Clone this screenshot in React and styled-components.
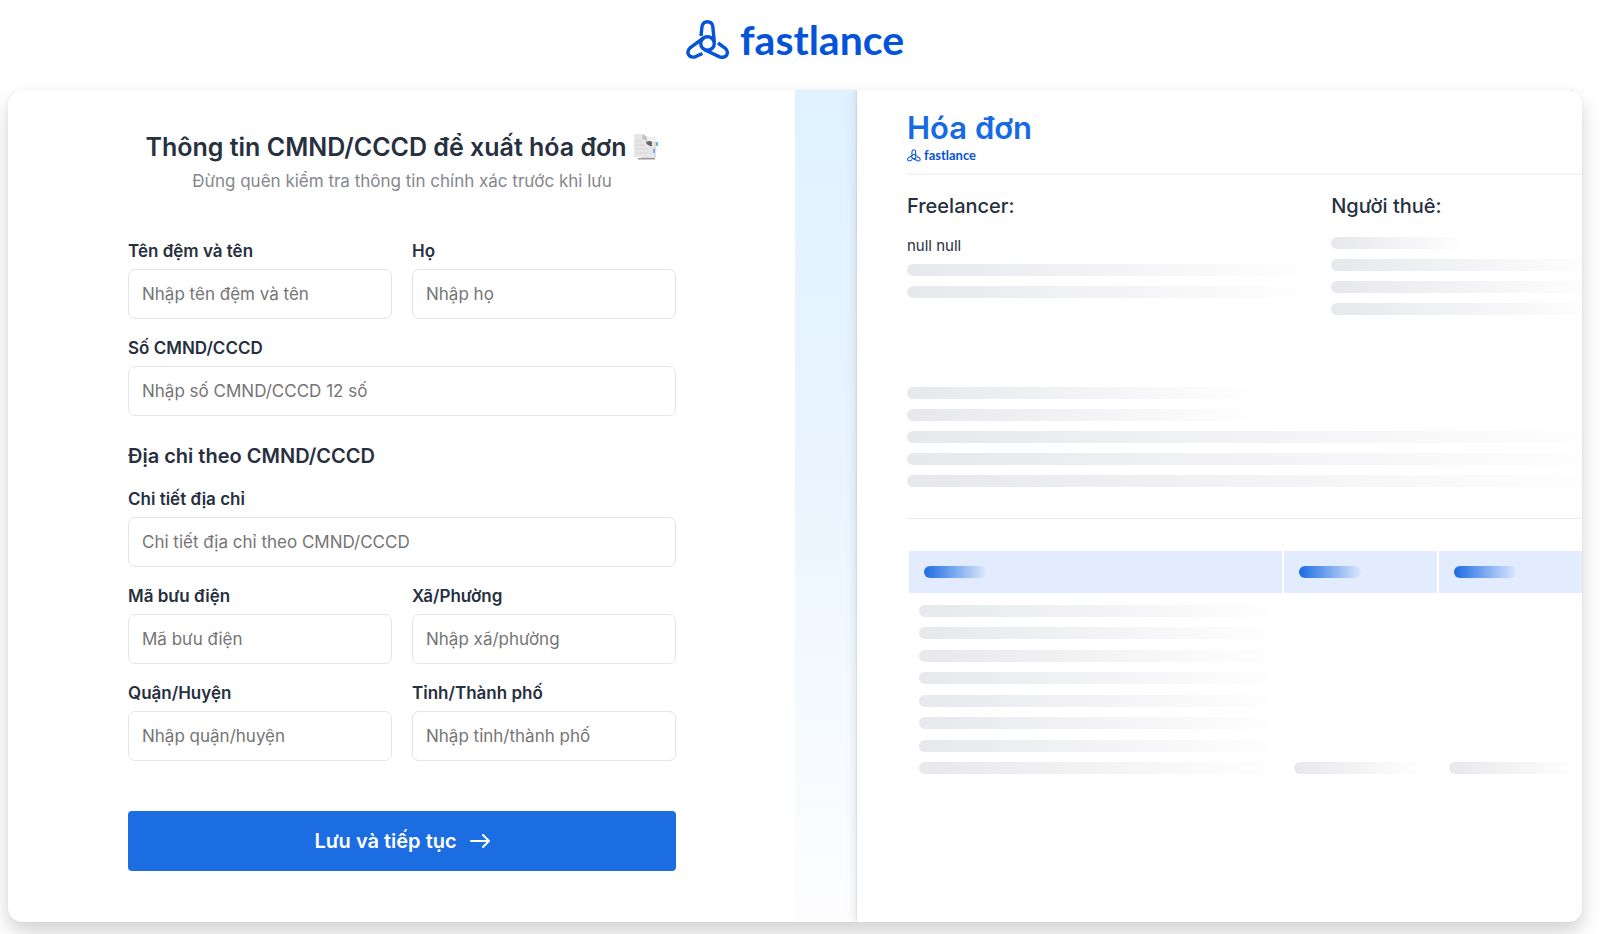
import { useState } from "react";
import styled, { createGlobalStyle } from "styled-components";

const FIELD_ROWS = [
  [
    { id: "firstName", label: "Tên đệm và tên", placeholder: "Nhập tên đệm và tên" },
    { id: "lastName", label: "Họ", placeholder: "Nhập họ" },
  ],
  [{ id: "idNumber", label: "Số CMND/CCCD", placeholder: "Nhập số CMND/CCCD 12 số" }],
];

const ADDRESS_ROWS = [
  [{ id: "street", label: "Chi tiết địa chỉ", placeholder: "Chi tiết địa chỉ theo CMND/CCCD" }],
  [
    { id: "postcode", label: "Mã bưu điện", placeholder: "Mã bưu điện" },
    { id: "ward", label: "Xã/Phường", placeholder: "Nhập xã/phường" },
  ],
  [
    { id: "district", label: "Quận/Huyện", placeholder: "Nhập quận/huyện" },
    { id: "province", label: "Tỉnh/Thành phố", placeholder: "Nhập tỉnh/thành phố" },
  ],
];

const Logo = ({ small }) => (
  <Brand href="#" $small={small}>
    <BrandMark viewBox="0 0 44 40" $small={small} aria-hidden="true">
      <circle cx="21.500" cy="23.500" r="6.800" />
      <path d="M15 16 L16 6.500 Q17 1.800 21.500 1.800 Q26 1.800 26.800 6.500 L28.300 22" />
      <path d="M17.500 18 L4.400 27.500 Q0.800 30.800 2.400 34.400 Q4.400 38 9 36.800 L16.500 33.500" />
      <path d="M18 29.500 L33.600 36.800 Q38.600 38.400 40.800 34.800 Q42.600 31 39 28 L32 23" />
    </BrandMark>
    fastlance
  </Brand>
);

const Documents = () => (
  <DocIcon viewBox="0 0 26 28" aria-hidden="true">
    <path d="M8 8h15v17H8z" fill="#dcdcdc" />
    <path d="M5 25h17v1.500H5z" fill="#9a9a9a" />
    <path d="M1 1h9l4 3v4h7v16H1z" fill="#e6e6e6" />
    <path d="M14 4h8v5h-8z" fill="#efefef" />
    <path d="M10 1l4 3v4l-5-2z" fill="#c2c2c2" />
    <path d="M13 9q4-2 6 0v4q-3 1-6-3z" fill="#666" />
    <path d="M3 8h6M3 12h9M3 16h12M3 20h12" stroke="#d6d6d6" />
    <path d="M23 9h2v4h-2zM20 16h2v4h-2z" fill="#6aaef2" />
  </DocIcon>
);

const Fields = ({ rows, values, onChange }) =>
  rows.map((row) => (
    <Row key={row[0].id}>
      {row.map(({ id, label, placeholder }) => (
        <Field key={id}>
          <Label htmlFor={id}>{label}</Label>
          <Input
            id={id}
            placeholder={placeholder}
            value={values[id] || ""}
            onChange={(e) => onChange(id, e.target.value)}
          />
        </Field>
      ))}
    </Row>
  ));

const Bars = ({ widths }) => (
  <BarList>
    {widths.map((width, i) => (
      <Bar key={i} $width={width} />
    ))}
  </BarList>
);

const App = () => {
  const [values, setValues] = useState({});
  const setField = (id, value) => setValues({ ...values, [id]: value });

  return (
    <>
      <GlobalStyle />
      <Header>
        <Logo />
      </Header>
      <Card>
        <FormPanel onSubmit={(e) => e.preventDefault()}>
          <Title>
            Thông tin CMND/CCCD để xuất hóa đơn
            <Documents />
          </Title>
          <Subtitle>Đừng quên kiểm tra thông tin chính xác trước khi lưu</Subtitle>
          <Fields rows={FIELD_ROWS} values={values} onChange={setField} />
          <SectionTitle>Địa chỉ theo CMND/CCCD</SectionTitle>
          <Fields rows={ADDRESS_ROWS} values={values} onChange={setField} />
          <SaveButton type="submit">
            Lưu và tiếp tục
            <Arrow viewBox="0 0 20 14" aria-hidden="true">
              <path d="M1 7h18M13 1l6 6-6 6" />
            </Arrow>
          </SaveButton>
        </FormPanel>
        <PreviewPanel>
          <Sheet>
            <SheetHeader>
              <InvoiceTitle>Hóa đơn</InvoiceTitle>
              <Logo small />
            </SheetHeader>
            <Parties>
              <div>
                <PartyTitle>Freelancer:</PartyTitle>
                <PartyName>null null</PartyName>
                <Bars widths={["100%", "100%"]} />
              </div>
              <div>
                <PartyTitle>Người thuê:</PartyTitle>
                <Bars widths={["50%", "100%", "100%", "100%"]} />
              </div>
            </Parties>
            <Details>
              <Bars widths={["50%", "50%", "100%", "100%", "100%"]} />
            </Details>
            <Table>
              <thead>
                <tr>
                  <HeadCell $wide><Pill /></HeadCell>
                  <HeadCell><Pill /></HeadCell>
                  <HeadCell><Pill /></HeadCell>
                </tr>
              </thead>
              <tbody>
                <tr>
                  <Cell>
                    <ItemLines>
                      {Array.from({ length: 8 }, (_, i) => (
                        <Bar key={i} $width="100%" />
                      ))}
                    </ItemLines>
                  </Cell>
                  <Cell><Bar $width="94%" /></Cell>
                  <Cell><Bar $width="94%" /></Cell>
                </tr>
              </tbody>
            </Table>
          </Sheet>
        </PreviewPanel>
      </Card>
    </>
  );
};

export default App;

const GlobalStyle = createGlobalStyle`
  * {
    box-sizing: border-box;
  }
  body {
    margin: 0;
    background: #fff;
    color: #27303f;
    font-family: Inter, "Liberation Sans", sans-serif;
    overflow: hidden;
  }
  h1, h2, h3, p {
    margin: 0;
  }
`;
const Header = styled.header`
  display: flex;
  justify-content: center;
  align-items: center;
  height: 90px;
  padding: 0 18px 10px 8px;
`;
const Brand = styled.a`
  display: flex;
  align-items: center;
  gap: ${({ $small }) => ($small ? "3px" : "10px")};
  color: #0553d8;
  font-family: Lato, sans-serif;
  font-size: ${({ $small }) => ($small ? "13px" : "41px")};
  font-weight: 700;
  line-height: ${({ $small }) => ($small ? "14px" : "36px")};
  text-decoration: none;
`;
const BrandMark = styled.svg`
  width: ${({ $small }) => ($small ? "14px" : "44px")};
  height: ${({ $small }) => ($small ? "13px" : "40px")};
  fill: none;
  stroke: currentColor;
  stroke-width: 3.4;
`;
const Card = styled.main`
  display: grid;
  grid-template-columns: 1fr 1fr;
  margin: 0 18px 40px 8px;
  border-radius: 14px;
  background: #fff;
  box-shadow: 0 0 1px rgba(0, 0, 0, 0.14), 0 10px 20px rgba(0, 0, 0, 0.18);
  overflow: hidden;
`;
const FormPanel = styled.form`
  padding: 40px 119px 51px 120px;
`;
const Title = styled.h1`
  display: flex;
  justify-content: center;
  align-items: center;
  gap: 6px;
  font-size: 25px;
  font-weight: 600;
  line-height: 34px;
  white-space: nowrap;
`;
const DocIcon = styled.svg`
  width: 26px;
  height: 28px;
`;
const Subtitle = styled.p`
  margin: 5px 0 46px;
  color: #84878d;
  font-size: 17px;
  line-height: 24px;
  text-align: center;
`;
const Row = styled.div`
  display: flex;
  gap: 20px;
  margin-bottom: 17px;
`;
const Field = styled.div`
  display: flex;
  flex: 1;
  flex-direction: column;
  gap: 6px;
  min-width: 0;
`;
const Label = styled.label`
  font-size: 17px;
  font-weight: 600;
  line-height: 24px;
`;
const Input = styled.input`
  width: 100%;
  height: 50px;
  padding: 0 13px;
  border: 1px solid #e4e5ea;
  border-radius: 7px;
  background: #fff;
  color: inherit;
  font-family: inherit;
  font-size: 17px;
  &::placeholder {
    color: #757575;
  }
`;
const SectionTitle = styled.h2`
  margin: 27px 0 18px;
  font-size: 20px;
  font-weight: 600;
  line-height: 26px;
`;
const SaveButton = styled.button`
  display: flex;
  justify-content: center;
  align-items: center;
  gap: 13px;
  width: 100%;
  height: 60px;
  margin-top: 50px;
  border: none;
  border-radius: 4px;
  background: #1c6ce2;
  color: #fff;
  font-family: inherit;
  font-size: 20px;
  font-weight: 600;
  cursor: pointer;
`;
const Arrow = styled.svg`
  width: 20px;
  height: 14px;
  fill: none;
  stroke: currentColor;
  stroke-width: 2;
  stroke-linecap: round;
  stroke-linejoin: round;
`;
const PreviewPanel = styled.section`
  display: flex;
  min-width: 0;
  padding-left: 62px;
  background: linear-gradient(#e0f2ff, #e9f4ff 45%, #f5faff 75%, #fdfdfe);
  overflow: hidden;
`;
const Sheet = styled.article`
  flex: none;
  width: calc(100% + 62px);
  padding: 18px 50px;
  background: #fff;
  box-shadow: 0 0 2px rgba(0, 0, 0, 0.16), 0 0 12px rgba(0, 0, 0, 0.12);
`;
const SheetHeader = styled.header`
  height: 67px;
  border-bottom: 2px solid #f4f4f6;
`;
const InvoiceTitle = styled.h2`
  color: #176ae5;
  font-size: 31px;
  font-weight: 600;
  line-height: 40px;
`;
const Parties = styled.div`
  display: grid;
  grid-template-columns: 3fr 2fr;
  gap: 30px;
  min-height: 212px;
  padding-top: 16px;
`;
const PartyTitle = styled.h3`
  margin-bottom: 16px;
  font-size: 20px;
  font-weight: 500;
  line-height: 30px;
`;
const PartyName = styled.p`
  margin-bottom: 9px;
  font-size: 15px;
  line-height: 18px;
`;
const BarList = styled.div`
  display: flex;
  flex-direction: column;
  gap: 10px;
`;
const ItemLines = styled(BarList)`
  justify-content: space-between;
  gap: 0;
  height: 169px;
`;
const Bar = styled.div`
  width: ${({ $width }) => $width};
  height: 12px;
  border-radius: 6px;
  background: linear-gradient(90deg, #e7e8ec, #fefefe);
`;
const Details = styled.div`
  min-height: 132px;
  border-bottom: 1px solid #ececee;
`;
const Table = styled.table`
  width: 100%;
  margin-top: 30px;
  border-spacing: 2px;
  table-layout: fixed;
`;
const HeadCell = styled.th`
  width: ${({ $wide }) => ($wide ? "55%" : "auto")};
  padding: 15px;
  background: #e2ecfe;
`;
const Pill = styled.div`
  width: 62px;
  height: 12px;
  border-radius: 6px;
  background: linear-gradient(90deg, #1c6ce2, #dbe7fd);
`;
const Cell = styled.td`
  padding: 10px;
  vertical-align: bottom;
`;
